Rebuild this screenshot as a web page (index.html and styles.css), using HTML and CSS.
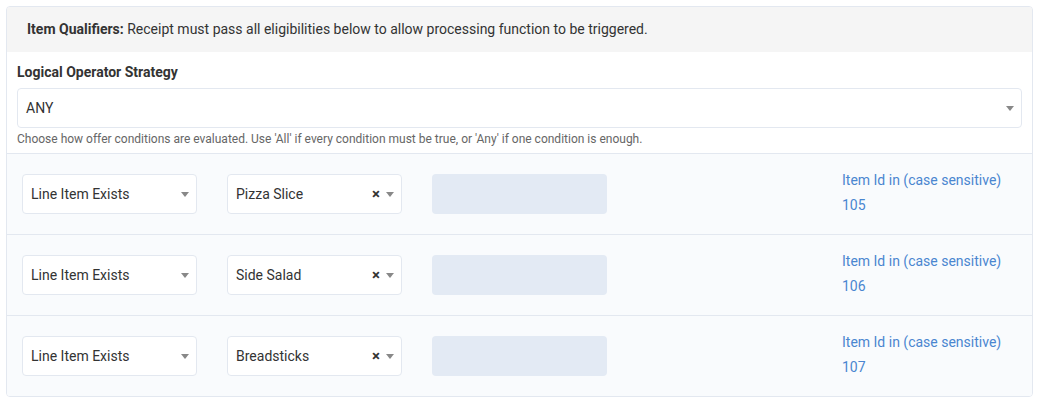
FILE: index.html
```html
<!DOCTYPE html>
<html lang="en">
<head>
  <meta charset="UTF-8" />
  <title>Item Qualifiers</title>
  <link rel="stylesheet" href="styles.css">
</head>
<body>

  <div class="panel">
    <div class="panel-head">
      <b>Item Qualifiers:</b> Receipt must pass all eligibilities below to allow processing function to be triggered.
    </div>

    <div class="strategy">
      <label class="field-label">Logical Operator Strategy</label>
      <div class="select">
        <span>ANY</span>
        <span class="caret"></span>
      </div>
      <p class="hint">Choose how offer conditions are evaluated. Use 'All' if every condition must be true, or 'Any' if one condition is enough.</p>
    </div>

    <div class="rule">
      <div class="select"><span>Line Item Exists</span><span class="caret"></span></div>
      <div class="select"><span>Pizza Slice</span><span class="tools"><span class="clear">×</span><span class="caret"></span></span></div>
      <div class="blank"></div>
      <div></div>
      <div class="meta">
        <span>Item Id in (case sensitive)</span>
        <span>105</span>
      </div>
    </div>

    <div class="rule">
      <div class="select"><span>Line Item Exists</span><span class="caret"></span></div>
      <div class="select"><span>Side Salad</span><span class="tools"><span class="clear">×</span><span class="caret"></span></span></div>
      <div class="blank"></div>
      <div></div>
      <div class="meta">
        <span>Item Id in (case sensitive)</span>
        <span>106</span>
      </div>
    </div>

    <div class="rule">
      <div class="select"><span>Line Item Exists</span><span class="caret"></span></div>
      <div class="select"><span>Breadsticks</span><span class="tools"><span class="clear">×</span><span class="caret"></span></span></div>
      <div class="blank"></div>
      <div></div>
      <div class="meta">
        <span>Item Id in (case sensitive)</span>
        <span>107</span>
      </div>
    </div>
  </div>

</body>
</html>
```

FILE: styles.css
```css
body {
  margin: 0;
  padding: 6px 8px 0 6px;
  font-family: Roboto, 'Liberation Sans', sans-serif;
  color: #333;
  background: #fff;
}

.panel {
  border: 1px solid #e3e8f0;
  border-radius: 4px;
  overflow: hidden;
}

.panel-head {
  background: #f5f5f5;
  height: 45px;
  padding-left: 20px;
  font-size: 14px;
  line-height: 45px;
}

.panel-head b {
  font-weight: 700;
}

.strategy {
  padding: 12px 10px 7px 10px;
}

.field-label {
  display: block;
  font-size: 14px;
  font-weight: 700;
  margin-bottom: 8px;
}

.select {
  display: flex;
  align-items: center;
  justify-content: space-between;
  box-sizing: border-box;
  height: 40px;
  padding: 0 7px 0 8px;
  background: #fff;
  border: 1px solid #e3e8f0;
  border-radius: 4px;
  font-size: 14px;
  color: #333;
}

.caret {
  width: 0;
  height: 0;
  border-left: 4px solid transparent;
  border-right: 4px solid transparent;
  border-top: 5px solid #888;
}

.tools {
  display: flex;
  align-items: center;
  gap: 6px;
}

.clear {
  font-size: 15px;
  font-weight: 700;
  color: #333;
  line-height: 1;
}

.hint {
  margin: 4px 0 0 0;
  font-size: 12px;
  color: #666;
}

.rule {
  display: grid;
  grid-template-columns: repeat(5, 175px);
  gap: 30px;
  height: 80px;
  padding: 0 15px;
  align-items: center;
  background: #f9fbfd;
  border-top: 1px solid #e3e8f0;
}

.blank {
  height: 40px;
  background: #e3eaf4;
  border-radius: 4px;
}

.meta {
  display: flex;
  flex-direction: column;
  gap: 9px;
  font-size: 14px;
  color: #4a86d0;
  align-self: start;
  padding-top: 18px;
}
```
